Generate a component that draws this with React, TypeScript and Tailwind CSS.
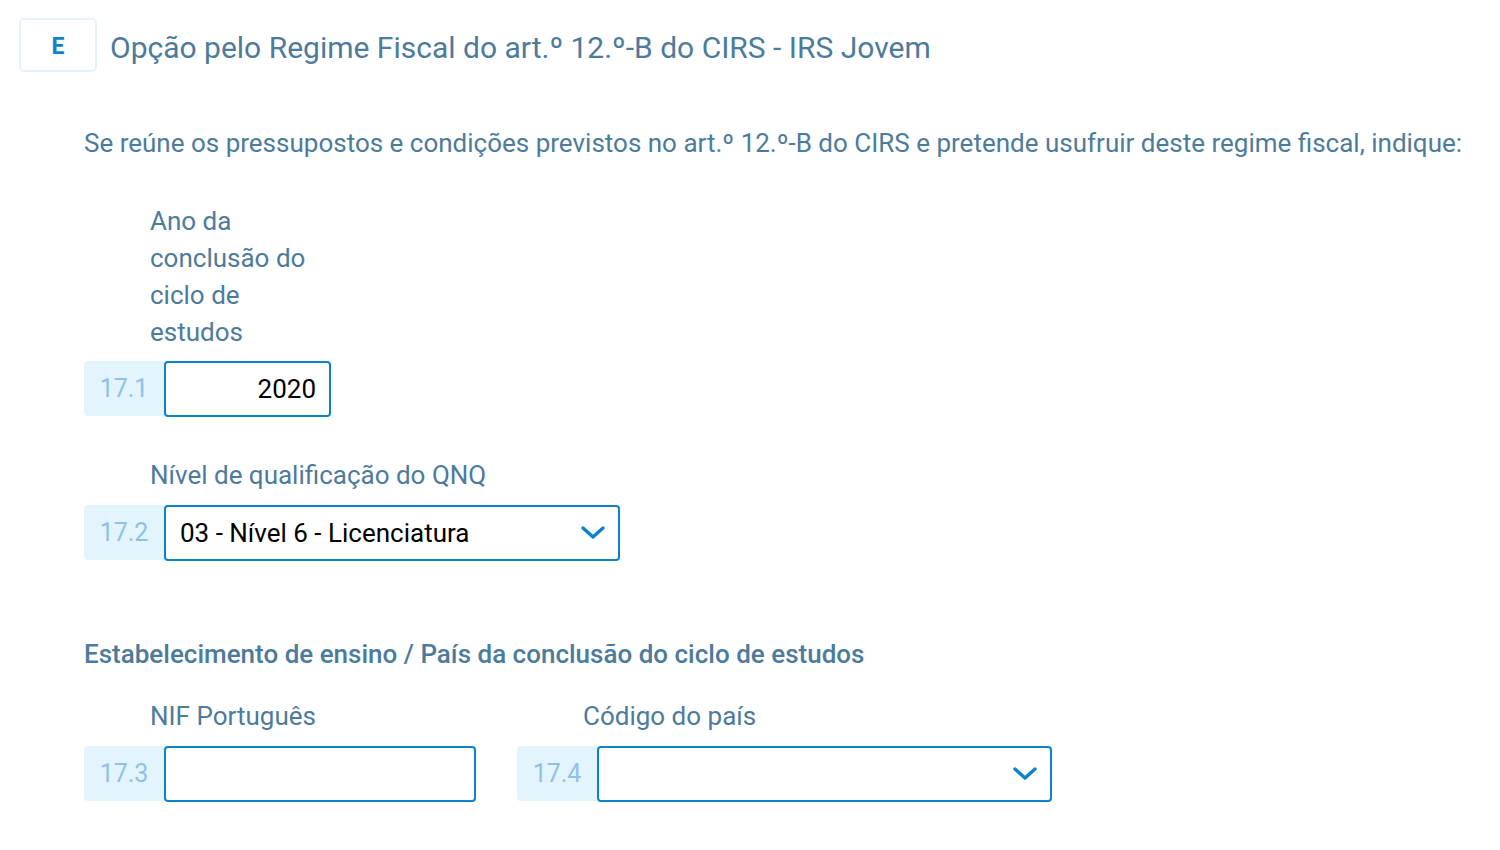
import React from "react";

const Chevron = () => (
  <svg width="26" height="16" viewBox="0 0 26 16" fill="none">
    <path d="M3 3 L13 12 L23 3" stroke="#0a84c8" strokeWidth="3.4" strokeLinecap="round" strokeLinejoin="round" />
  </svg>
);

const NumBox = ({ n }: { n: string }) => (
  <div className="flex h-[55px] w-[80px] items-center justify-center rounded-l-[4px] bg-[#e4f4fd] text-[25px] text-[#8cc2e6]">
    {n}
  </div>
);

export default function App() {
  return (
    <div
      className="min-h-[850px] w-[1500px] bg-white"
      style={{ fontFamily: "Roboto, 'Liberation Sans', sans-serif" }}
    >
      <div className="flex items-center pl-[19px] pt-[18px]">
        <div className="flex h-[54px] w-[78px] items-center justify-center rounded-[5px] border-2 border-[#e3f2fc] pt-[4px] text-[23px] font-bold text-[#1082c9]">
          E
        </div>
        <div className="ml-[13px] pt-[6px] text-[30px] leading-[40px] text-[#4d7b9b]">
          Opção pelo Regime Fiscal do art.º 12.º-B do CIRS - IRS Jovem
        </div>
      </div>

      <div className="pl-[84px]">
        <p className="mt-[54px] text-[26px] leading-[34px] text-[#4d7b9b]">
          Se reúne os pressupostos e condições previstos no art.º 12.º-B do CIRS e pretende usufruir deste regime fiscal, indique:
        </p>

        <div className="ml-[66px] mt-[43px] w-[170px] text-[26px] leading-[37px] text-[#4d7b9b]">
          Ano da conclusão do ciclo de estudos
        </div>
        <div className="mt-[10px] flex">
          <NumBox n="17.1" />
          <div className="flex h-[56px] w-[167px] items-center justify-end rounded-[4px] border-2 border-[#0a84c8] px-[13px] text-[26px] text-black">
            2020
          </div>
        </div>

        <div className="ml-[66px] mt-[40px] text-[26px] leading-[37px] text-[#4d7b9b]">
          Nível de qualificação do QNQ
        </div>
        <div className="mt-[11px] flex">
          <NumBox n="17.2" />
          <div className="flex h-[56px] w-[456px] items-center justify-between rounded-[4px] border-2 border-[#0a84c8] pl-[14px] pr-[12px] text-[26px] text-black">
            <span>03 - Nível 6 - Licenciatura</span>
            <Chevron />
          </div>
        </div>

        <div className="mt-[75px] text-[26px] font-medium leading-[37px] text-[#4d7b9b]">
          Estabelecimento de ensino / País da conclusão do ciclo de estudos
        </div>

        <div className="mt-[25px] flex gap-[41px]">
          <div>
            <div className="ml-[66px] text-[26px] leading-[37px] text-[#4d7b9b]">NIF Português</div>
            <div className="mt-[11px] flex">
              <NumBox n="17.3" />
              <div className="h-[56px] w-[312px] rounded-[4px] border-2 border-[#0a84c8]" />
            </div>
          </div>
          <div>
            <div className="ml-[66px] text-[26px] leading-[37px] text-[#4d7b9b]">Código do país</div>
            <div className="mt-[11px] flex">
              <NumBox n="17.4" />
              <div className="flex h-[56px] w-[455px] items-center justify-end rounded-[4px] border-2 border-[#0a84c8] pr-[12px]">
                <Chevron />
              </div>
            </div>
          </div>
        </div>
      </div>
    </div>
  );
}
